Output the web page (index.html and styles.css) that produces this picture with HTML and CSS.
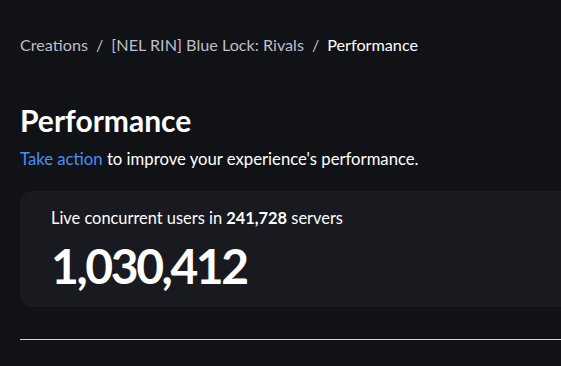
FILE: index.html
```html
<!DOCTYPE html>
<html lang="en">
<head>
    <meta charset="UTF-8">
    <meta name="viewport" content="width=device-width, initial-scale=1.0">
    <title>Performance</title>
    <link rel="stylesheet" href="styles.css">
</head>
<body>
    <div class="page">
        <nav class="breadcrumb">
            <a href="#">Creations</a>
            <span class="sep">/</span>
            <a href="#">[NEL RIN] Blue Lock: Rivals</a>
            <span class="sep">/</span>
            <span class="current">Performance</span>
        </nav>

        <h1 class="title">Performance</h1>
        <p class="subtitle"><a href="#" class="action">Take action</a> to improve your experience's performance.</p>

        <div class="card">
            <div class="card-label">Live concurrent users in <b>241,728</b> servers</div>
            <div class="card-value">1,030,412</div>
        </div>

        <hr class="divider">
    </div>
</body>
</html>
```

FILE: styles.css
```css
body {
    margin: 0;
    padding: 0;
    background-color: #111216;
    color: #ffffff;
    font-family: Lato, "Noto Sans", sans-serif;
    overflow: hidden;
}

.page {
    width: 900px;
    padding: 0 20px;
}

.breadcrumb {
    padding-top: 34px;
    font-size: 16.2px;
    line-height: 22px;
    color: #bcbec8;
    display: flex;
    gap: 8px;
}

.breadcrumb a {
    color: #bcbec8;
    text-decoration: none;
}

.breadcrumb .current {
    color: #ffffff;
}

.title {
    margin: 45px 0 0;
    font-size: 30px;
    line-height: 38px;
    font-weight: 700;
}

.subtitle {
    margin: 9px 0 0;
    font-size: 16.7px;
    line-height: 22px;
}

.action {
    color: #4b8ef7;
    text-decoration: none;
}

.card {
    margin-top: 21px;
    background-color: #191a1f;
    border-radius: 12px;
    padding: 16px 31px 13px;
}

.card-label {
    font-size: 16.4px;
    line-height: 22px;
}

.card-value {
    margin-top: 9px;
    font-size: 48px;
    line-height: 56px;
    font-weight: 700;
    letter-spacing: -2.4px;
}

.divider {
    margin: 32px 0 0;
    border: none;
    border-top: 1px solid #d4d4d8;
}
```
